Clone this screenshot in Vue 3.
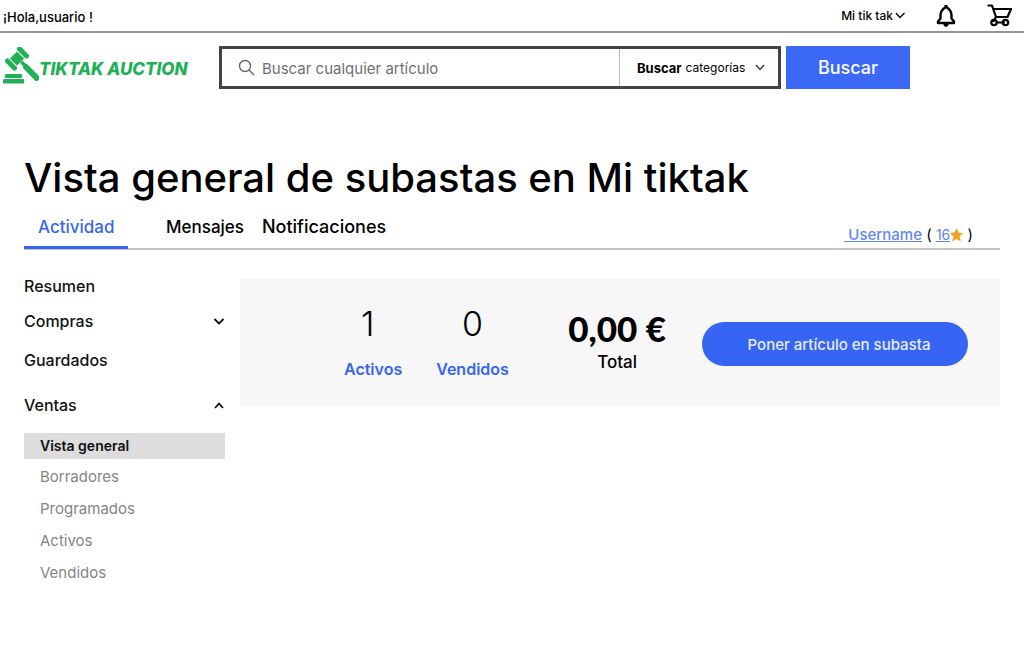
<script setup>
import { ref } from 'vue'

const query = ref('')
const category = ref('all')
const salesItems = ['Vista general', 'Borradores', 'Programados', 'Activos', 'Vendidos']
</script>

<template>
  <div class="page">
    <div class="topbar">
      <span class="hello">¡Hola,usuario !</span>
      <div class="top-actions">
        <button type="button" class="account">
          Mi tik tak
          <svg width="10" height="7" viewBox="0 0 10 7"><path d="M1 1l4 4.500L9.500 1" fill="none" stroke="#000" stroke-width="1.300" /></svg>
        </button>
        <button type="button" class="icon-button" aria-label="Notificaciones">
          <svg width="20" height="24" viewBox="0 0 20 24">
            <path d="M2 19v-1.500l2.500-3V11c0-3.500 2-6 5.500-8 3.500 2 5.500 4.500 5.500 8v3.500l2.500 3V19z" fill="none" stroke="#000" stroke-width="2.400" stroke-linejoin="round" />
            <path d="M7 19h6l-1 3-2 1-2-1zM8.500 1h3v3h-3z" />
          </svg>
        </button>
        <button type="button" class="icon-button cart" aria-label="Carrito">
          <svg width="26" height="24" viewBox="0 0 26 24">
            <g fill="none" stroke="#000" stroke-width="2.200" stroke-linejoin="round" stroke-linecap="round">
              <path d="M1.500 1.500H5l4 11.500h11.500L24 5H6.500" />
              <path d="M9 13L6.500 17M10 18.500h7" />
              <circle cx="7" cy="18.500" r="2.700" />
              <circle cx="18.500" cy="18.500" r="2.700" />
            </g>
          </svg>
        </button>
      </div>
    </div>

    <header class="header">
      <a href="#" class="logo">
        <svg width="36" height="41" viewBox="0 0 36 41" fill="#20b056">
          <rect x="0" y="32" width="21" height="4.500" rx="1" />
          <rect x="2" y="27" width="17" height="4" rx="1" />
          <g transform="translate(14 11.500) rotate(45)">
            <rect x="-5" y="-5" width="10" height="10" />
            <rect x="-7.500" y="-11" width="15" height="5" rx="2.200" />
            <rect x="-7.500" y="6" width="15" height="5" rx="2.200" />
          </g>
          <path d="M17 16l2.500-2.500 3.500 3.500-2.500 2.500zM19.500 20.500l4-4L36 29c2 2.500-1.500 6.500-4 4.500z" />
        </svg>
        <span>TIKTAK AUCTION</span>
      </a>
      <form class="search" @submit.prevent>
        <div class="search-box">
          <label class="query">
            <svg width="18" height="18" viewBox="0 0 18 18" fill="none" stroke="#666" stroke-width="1.400"><circle cx="7" cy="7" r="5.500" /><path d="M11 11l5 5" /></svg>
            <input v-model="query" type="text" placeholder="Buscar cualquier artículo" aria-label="Buscar cualquier artículo">
          </label>
          <div class="category">
            <label for="category">Buscar</label>
            <select id="category" v-model="category"><option value="all">categorías</option></select>
            <svg width="10" height="7" viewBox="0 0 10 7"><path d="M1 1l4 4.500L9 1" fill="none" stroke="#333" stroke-width="1.300" /></svg>
          </div>
        </div>
        <button type="submit" class="submit">Buscar</button>
      </form>
    </header>

    <main class="main">
      <h1>Vista general de subastas en Mi tiktak</h1>
      <div class="tabs-row">
        <nav class="tabs">
          <a href="#" class="tab active">Actividad</a>
          <a href="#" class="tab">Mensajes</a>
          <a href="#" class="tab large">Notificaciones</a>
        </nav>
        <div class="user"><a href="#" class="username">&nbsp;Username</a> ( <a href="#" class="score">16<svg width="13" height="14" viewBox="0 0 13 14"><path d="M6.500 0l2 4.500 4.500.5-3.500 3.500 1.500 5-4.500-2.500L2 13.500l1.500-5L0 5l4.500-.5z" fill="#f5a01d" /></svg></a> )</div>
      </div>

      <div class="content">
        <nav class="sidebar">
          <a href="#" class="group">Resumen</a>
          <button type="button" class="group">
            Compras
            <svg width="12" height="9" viewBox="0 0 12 9"><path d="M1.500 2L6 6.500 10.500 2" fill="none" stroke="#111" stroke-width="1.800" /></svg>
          </button>
          <a href="#" class="group saved">Guardados</a>
          <button type="button" class="group sales">
            Ventas
            <svg width="12" height="9" viewBox="0 0 12 9"><path d="M2 7l4-4.500L10 7" fill="none" stroke="#111" stroke-width="1.800" /></svg>
          </button>
          <ul>
            <li v-for="(item, i) in salesItems" :key="item">
              <a href="#" :class="{ current: i === 0 }">{{ item }}</a>
            </li>
          </ul>
        </nav>

        <section class="summary">
          <div class="stat active-count"><span class="count">1</span><a href="#">Activos</a></div>
          <div class="stat sold"><span class="count">0</span><a href="#">Vendidos</a></div>
          <div class="total"><strong>0,00 €</strong><span>Total</span></div>
          <button type="button" class="publish">Poner artículo en subasta</button>
        </section>
      </div>
    </main>
  </div>
</template>

<style>
body {
  background: #fff;
}
</style>

<style scoped>
.page {
  font-family: Inter, "Liberation Sans", sans-serif;
  color: #000;
}
.page * {
  box-sizing: border-box;
}
button,
input,
select {
  font: inherit;
  color: inherit;
  border: 0;
  padding: 0;
  background: none;
}
button {
  cursor: pointer;
}
a {
  color: inherit;
  text-decoration: none;
}
.topbar {
  display: flex;
  justify-content: space-between;
  align-items: center;
  height: 33px;
  padding: 0 11px 0 3px;
  border-bottom: 2px solid #959595;
}
.hello {
  font-size: 13px;
  font-weight: 500;
  padding-top: 2px;
}
.top-actions {
  display: flex;
  align-items: center;
}
.account {
  display: flex;
  align-items: center;
  gap: 2px;
  font-size: 12px;
  font-weight: 500;
}
.icon-button {
  display: flex;
  margin-left: 31px;
}
.header {
  display: flex;
  align-items: center;
  padding: 13px 114px 0 3px;
}
.logo {
  display: flex;
  align-items: center;
  width: 216px;
  color: #20b056;
  font-size: 17px;
  font-weight: 800;
  font-style: italic;
  white-space: nowrap;
}
.logo span {
  padding-top: 2px;
}
.search {
  display: flex;
  flex: 1;
  gap: 5px;
}
.search-box {
  display: flex;
  flex: 1;
  height: 43px;
  border: 3px solid #444;
}
.query {
  display: flex;
  flex: 1;
  align-items: center;
  gap: 6px;
  padding-left: 16px;
}
.query input {
  flex: 1;
  min-width: 0;
  padding-top: 2px;
  font-size: 15px;
  outline: 0;
}
.query input::placeholder {
  color: #707070;
  opacity: 1;
}
.category {
  display: flex;
  align-items: center;
  width: 159px;
  padding-left: 17px;
  border-left: 1px solid #bbb;
  font-size: 12px;
}
.category label {
  font-size: 13px;
  font-weight: 700;
  margin-right: 4px;
}
.category select {
  appearance: none;
  width: 69px;
}
.submit {
  width: 124px;
  background: #3b69f5;
  color: #fff;
  font-size: 18px;
  font-weight: 500;
}
.main {
  padding: 64px 24px 0;
}
h1 {
  margin: 0;
  font-size: 40px;
  font-weight: 500;
  line-height: 50px;
}
.tabs-row {
  display: flex;
  justify-content: space-between;
  height: 47px;
  border-bottom: 2px solid #c4c4c4;
}
.tabs {
  display: flex;
  height: 46px;
}
.tab {
  padding-top: 12px;
  font-size: 17px;
  font-weight: 500;
  line-height: 24px;
}
.tab.active {
  width: 104px;
  margin-right: 38px;
  padding-left: 14px;
  color: #3665f3;
  border-bottom: 3px solid #3665f3;
}
.tab.large {
  margin-left: 18px;
  font-size: 18px;
}
.user {
  padding: 20px 27px 0 0;
  font-size: 15px;
  line-height: 24px;
}
.user a {
  color: #5f86f7;
  text-decoration: underline;
}
.user .score {
  font-size: 14px;
}
.score svg {
  vertical-align: -2px;
}
.username {
  font-weight: 500;
}
.content {
  display: grid;
  grid-template-columns: 201px 1fr;
  column-gap: 15px;
  align-items: start;
  padding-top: 29px;
}
.sidebar {
  display: flex;
  flex-direction: column;
}
.group {
  display: flex;
  justify-content: space-between;
  align-items: center;
  height: 36px;
  color: #111;
  font-size: 16px;
  font-weight: 500;
}
.group:first-child {
  height: 14px;
  margin-bottom: 10px;
}
.saved {
  height: 42px;
}
.sales {
  height: 48px;
}
ul {
  list-style: none;
  margin: 4px 0 0;
  padding: 0;
}
li a {
  display: block;
  padding-left: 16px;
  color: #858585;
  font-size: 15px;
  line-height: 32px;
}
li .current {
  margin-bottom: 2px;
  background: #ddd;
  color: #111;
  font-size: 14px;
  font-weight: 600;
  line-height: 26px;
}
.summary {
  display: flex;
  align-items: flex-start;
  min-height: 127px;
  padding: 27px 32px 0 104px;
  background: #f7f7f7;
}
.stat {
  display: flex;
  flex-direction: column;
  align-items: center;
}
.stat a {
  margin-top: 17px;
  color: #3665f3;
  font-size: 16px;
  font-weight: 600;
  line-height: 20px;
}
.active-count .count {
  padding-right: 11px;
}
.sold {
  margin-left: 34px;
}
.count {
  font-size: 34px;
  font-weight: 300;
  line-height: 36px;
}
.total {
  display: flex;
  flex-direction: column;
  align-items: center;
  margin-left: auto;
  font-size: 17px;
  font-weight: 500;
  line-height: 24px;
}
.total strong {
  font-family: Lato, sans-serif;
  font-size: 35px;
  font-weight: 900;
  line-height: 44px;
}
.publish {
  width: 266px;
  height: 44px;
  margin: 16px 0 0 36px;
  padding-left: 8px;
  border-radius: 22px;
  background: #3665f3;
  color: #e8edfd;
  font-size: 15px;
  font-weight: 500;
}
</style>
